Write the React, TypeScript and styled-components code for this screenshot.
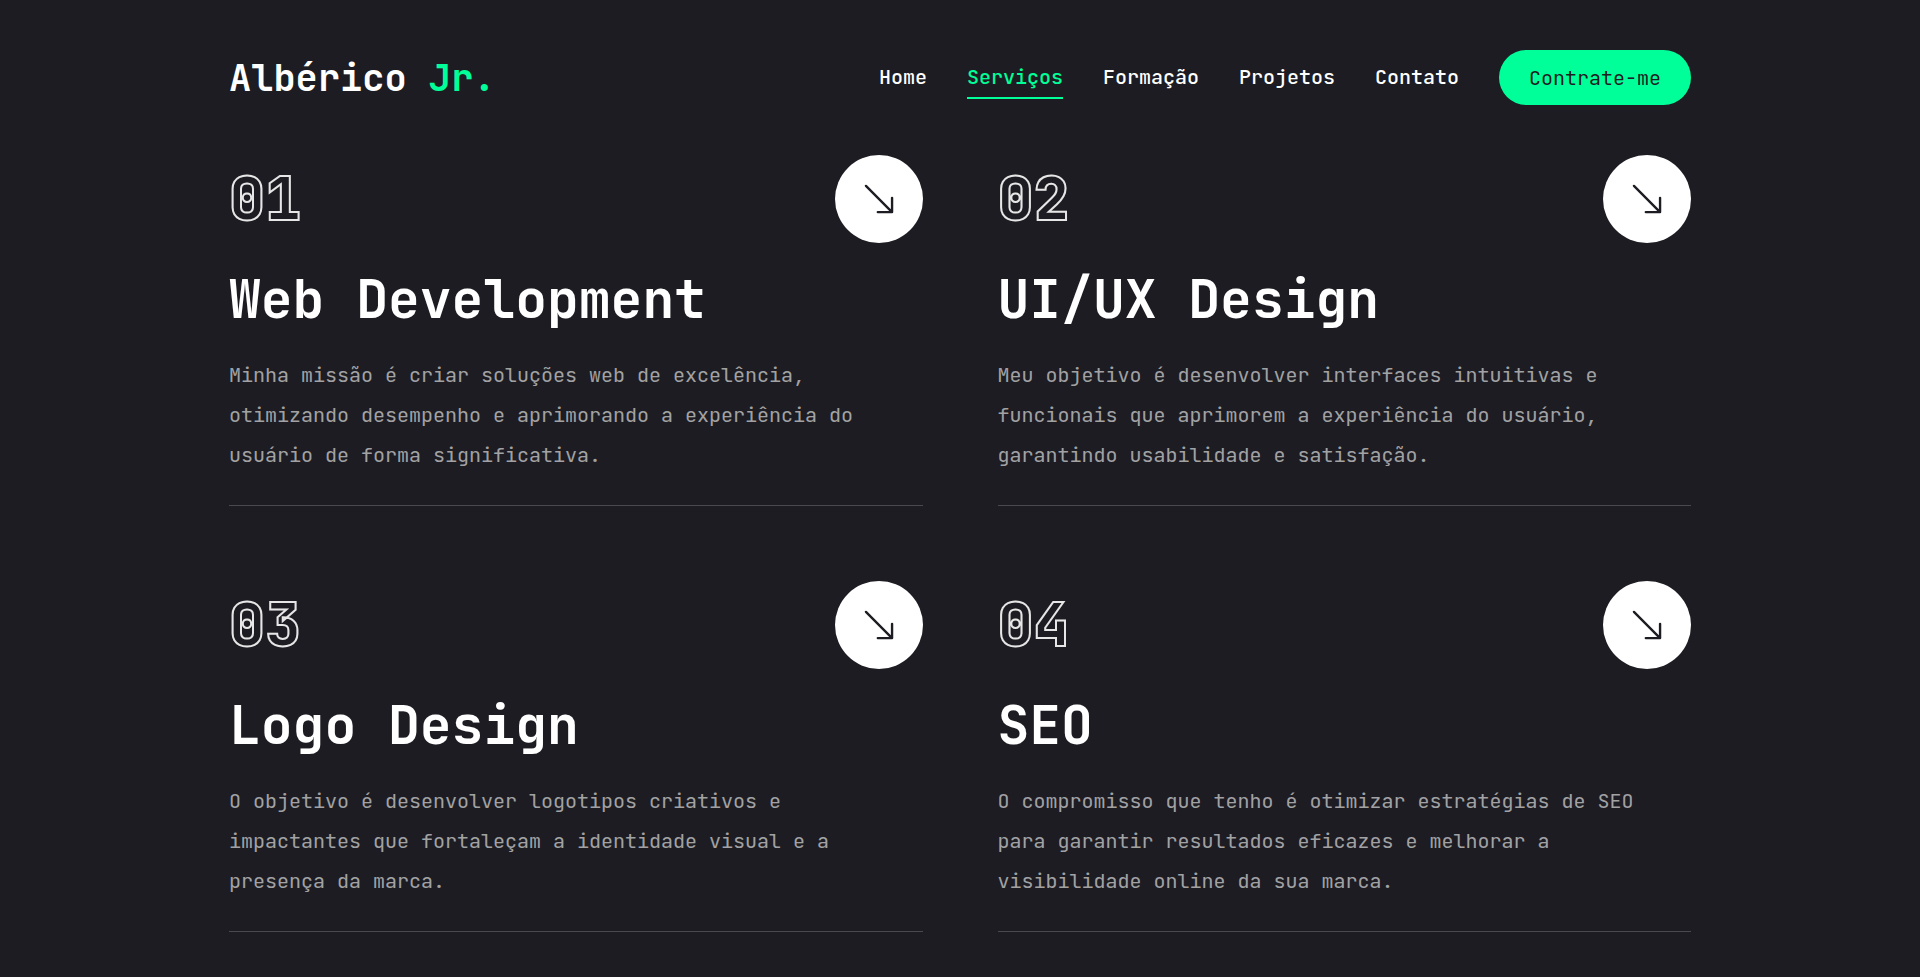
import React from "react";
import styled, { createGlobalStyle } from "styled-components";
import { BsArrowDownRight } from "react-icons/bs";

const colors = {
  primary: "#1c1c22",
  accent: "#00ff99",
  white: "#ffffff",
  outline: "#e6e6e6",
  muted: "rgba(255, 255, 255, 0.6)",
  line: "rgba(255, 255, 255, 0.2)",
};

const GlobalStyle = createGlobalStyle`
  *, *::before, *::after {
    box-sizing: border-box;
  }
  body {
    margin: 0;
    background: ${colors.primary};
    color: ${colors.white};
    font-family: "JetBrains Mono", "DejaVu Sans Mono", monospace;
    font-size: 20px;
  }
  h1, h2, p {
    margin: 0;
  }
  a {
    color: inherit;
    text-decoration: none;
  }
`;

const Container = styled.div`
  width: 100%;
  max-width: 1502px;
  margin: 0 auto;
  padding: 0 20px;
`;

const Header = styled.header`
  padding: 50px 0;
`;

const HeaderRow = styled(Container)`
  display: flex;
  align-items: center;
  justify-content: space-between;
  flex-wrap: wrap;
  gap: 20px;
`;

const Logo = styled.h1`
  font-size: 37px;
  line-height: 48px;
  font-weight: 600;

  span {
    color: ${colors.accent};
  }
`;

const Actions = styled.div`
  display: flex;
  align-items: center;
  flex-wrap: wrap;
  gap: 40px;
`;

const Nav = styled.nav`
  display: flex;
  flex-wrap: wrap;
  gap: 40px;
`;

const NavLink = styled.a<{ $active?: boolean }>`
  padding: 8px 0;
  border-bottom: 2px solid ${(p) => (p.$active ? colors.accent : "transparent")};
  color: ${(p) => (p.$active ? colors.accent : colors.white)};
  font-weight: 500;
  line-height: 24px;
`;

const HireButton = styled.button`
  height: 55px;
  padding: 0 30px;
  border: 0;
  border-radius: 28px;
  background: ${colors.accent};
  color: ${colors.primary};
  font: inherit;
  cursor: pointer;
`;

const ServiceGrid = styled.section`
  display: grid;
  grid-template-columns: repeat(auto-fit, minmax(min(100%, 520px), 1fr));
  gap: 75px;
`;

const Card = styled.article`
  display: flex;
  flex-direction: column;
  padding-bottom: 30px;
  border-bottom: 1px solid ${colors.line};
`;

const CardTop = styled.div`
  display: flex;
  align-items: center;
  justify-content: space-between;
`;

const CardNumber = styled.div`
  font-size: 60px;
  line-height: 60px;
  font-weight: 800;
  color: transparent;
  -webkit-text-stroke: 2px ${colors.outline};
`;

const ArrowLink = styled.a`
  display: flex;
  align-items: center;
  justify-content: center;
  width: 88px;
  height: 88px;
  border-radius: 50%;
  background: ${colors.white};
  color: ${colors.primary};
  font-size: 38px;
`;

const CardTitle = styled.h2`
  margin: 24px 0;
  font-size: 53px;
  line-height: 64px;
  font-weight: 700;
`;

const CardText = styled.p`
  color: ${colors.muted};
  line-height: 40px;
`;

const links = [
  { label: "Home", href: "#home" },
  { label: "Serviços", href: "#servicos", active: true },
  { label: "Formação", href: "#formacao" },
  { label: "Projetos", href: "#projetos" },
  { label: "Contato", href: "#contato" },
];

const services = [
  {
    num: "01",
    title: "Web Development",
    text: "Minha missão é criar soluções web de excelência, otimizando desempenho e aprimorando a experiência do usuário de forma significativa.",
  },
  {
    num: "02",
    title: "UI/UX Design",
    text: "Meu objetivo é desenvolver interfaces intuitivas e funcionais que aprimorem a experiência do usuário, garantindo usabilidade e satisfação.",
  },
  {
    num: "03",
    title: "Logo Design",
    text: "O objetivo é desenvolver logotipos criativos e impactantes que fortaleçam a identidade visual e a presença da marca.",
  },
  {
    num: "04",
    title: "SEO",
    text: "O compromisso que tenho é otimizar estratégias de SEO para garantir resultados eficazes e melhorar a visibilidade online da sua marca.",
  },
];

export default function App() {
  return (
    <>
      <GlobalStyle />
      <Header>
        <HeaderRow>
          <a href="#home">
            <Logo>
              Albérico <span>Jr.</span>
            </Logo>
          </a>
          <Actions>
            <Nav>
              {links.map((link) => (
                <NavLink
                  key={link.label}
                  href={link.href}
                  $active={link.active}
                  aria-current={link.active ? "page" : undefined}
                >
                  {link.label}
                </NavLink>
              ))}
            </Nav>
            <HireButton type="button">Contrate-me</HireButton>
          </Actions>
        </HeaderRow>
      </Header>
      <Container as="main">
        <ServiceGrid>
          {services.map((service) => (
            <Card key={service.num}>
              <CardTop>
                <CardNumber>{service.num}</CardNumber>
                <ArrowLink href="#contato" aria-label={service.title}>
                  <BsArrowDownRight />
                </ArrowLink>
              </CardTop>
              <CardTitle>{service.title}</CardTitle>
              <CardText>{service.text}</CardText>
            </Card>
          ))}
        </ServiceGrid>
      </Container>
    </>
  );
}
